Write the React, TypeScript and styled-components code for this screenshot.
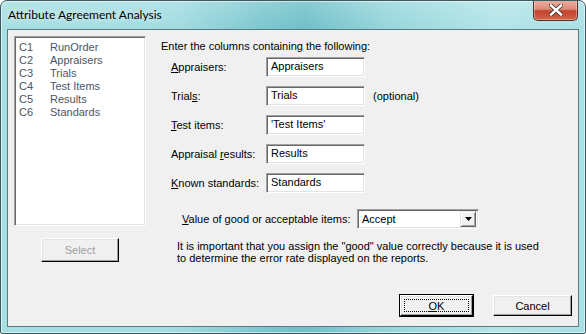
import React from 'react';
import styled, { createGlobalStyle } from 'styled-components';

const GlobalStyle = createGlobalStyle`
  html, body {
    margin: 0;
    padding: 0;
    background: #ffffff;
  }
  * {
    box-sizing: border-box;
  }
`;

const Window = styled.div`
  width: 586px;
  height: 334px;
  border: 1px solid #3b5a60;
  border-radius: 7px 7px 2px 2px;
  display: flex;
  flex-direction: column;
  background:
    linear-gradient(180deg, rgba(255, 255, 255, 0.18) 0px, rgba(255, 255, 255, 0) 28px),
    linear-gradient(90deg, #a7dfe3 0%, #a2dce1 30%, #7cc7ce 45%, #70c0c8 52%, #96d6db 66%, #b3e5e8 85%, #a9e0e4 100%);
  box-shadow: inset 0 0 0 1px rgba(255, 255, 255, 0.55);
  overflow: hidden;
`;

const TitleBar = styled.div`
  height: 28px;
  display: flex;
  align-items: flex-start;
  padding-left: 7px;
  padding-right: 7px;
`;

const Title = styled.div`
  font-family: Lato, 'Open Sans', sans-serif;
  font-size: 12px;
  color: #000;
  line-height: 16px;
  margin-top: 6px;
  text-shadow: 0 0 6px rgba(255, 255, 255, 0.9);
`;

const CloseButton = styled.div`
  margin-left: auto;
  margin-top: -1px;
  width: 45px;
  height: 21px;
  border: 1px solid #5b2c24;
  border-top: none;
  border-radius: 0 0 5px 5px;
  background: linear-gradient(180deg, #eab0a2 0%, #dd8d78 45%, #c4412a 55%, #d0654a 100%);
  box-shadow: inset 0 0 0 1px rgba(255, 255, 255, 0.35);
  display: flex;
  align-items: center;
  justify-content: center;
`;

const Client = styled.div`
  flex: 1;
  margin: 0 6px 6px;
  border: 1px solid #5d7a80;
  background: #f0f0f0;
  display: flex;
  flex-direction: column;
  font-family: 'Liberation Sans', Arial, sans-serif;
  font-size: 11px;
  color: #000;
`;

const Main = styled.div`
  display: flex;
  gap: 15px;
`;

const LeftColumn = styled.div`
  padding: 6px 0 0 6px;
  display: flex;
  flex-direction: column;
`;

const sunken = `
  border-top: 1px solid #a0a0a0;
  border-left: 1px solid #a0a0a0;
  border-bottom: 1px solid #ffffff;
  border-right: 1px solid #ffffff;
  box-shadow: inset 1px 1px 0 #696969, inset -1px -1px 0 #e3e3e3;
  background: #ffffff;
`;

const ListBox = styled.div`
  ${sunken}
  width: 132px;
  height: 190px;
  padding: 4px 0 0 4px;
`;

const ListRow = styled.div`
  display: flex;
  height: 13px;
  line-height: 13px;
  color: #4a5668;
`;

const ListCol = styled.span`
  width: 31px;
`;

const Button = styled.div<{ $width: number; $disabled?: boolean; $default?: boolean }>`
  width: ${(p) => p.$width}px;
  height: 21px;
  background: #f0f0f0;
  border-top: 1px solid #ffffff;
  border-left: 1px solid #ffffff;
  border-bottom: 1px solid #000000;
  border-right: 1px solid #000000;
  box-shadow: inset -1px -1px 0 #a0a0a0, inset 1px 1px 0 #e3e3e3;
  outline: ${(p) => (p.$default ? '1px solid #000' : 'none')};
  display: flex;
  align-items: center;
  justify-content: center;
  color: ${(p) => (p.$disabled ? '#a0a0a0' : '#000')};
  position: relative;
`;

const SelectButton = styled(Button)`
  height: 24px;
  margin: 12px 0 0 27px;
`;

const FocusRing = styled.div`
  position: absolute;
  inset: 3px;
  border: 1px dotted #000;
`;

const RightColumn = styled.div`
  padding-top: 10px;
  display: flex;
  flex-direction: column;
`;

const Heading = styled.div`
  line-height: 13px;
  margin-bottom: 4px;
`;

const Fields = styled.div`
  display: flex;
  flex-direction: column;
  gap: 9px;
  padding-left: 10px;
`;

const FieldRow = styled.div`
  display: flex;
  align-items: center;
  height: 20px;
`;

const Label = styled.span`
  width: 95px;
`;

const TextBox = styled.div`
  ${sunken}
  width: 99px;
  height: 20px;
  padding: 0 4px;
  line-height: 17px;
`;

const Note = styled.span`
  margin-left: 8px;
`;

const ValueRow = styled.div`
  display: flex;
  align-items: center;
  margin: 16px 0 0 21px;
  height: 20px;
`;

const ValueLabel = styled.span`
  width: 175px;
`;

const Combo = styled.div`
  ${sunken}
  width: 122px;
  height: 20px;
  display: flex;
  align-items: center;
  padding: 2px 2px 2px 4px;
`;

const ComboText = styled.span`
  flex: 1;
`;

const ComboArrow = styled.div`
  width: 16px;
  height: 16px;
  background: #f0f0f0;
  border-top: 1px solid #e3e3e3;
  border-left: 1px solid #e3e3e3;
  border-bottom: 1px solid #696969;
  border-right: 1px solid #696969;
  box-shadow: inset 1px 1px 0 #ffffff, inset -1px -1px 0 #a0a0a0;
  display: flex;
  align-items: center;
  justify-content: center;
`;

const Info = styled.div`
  margin: 11px 0 0 16px;
  line-height: 12px;
`;

const Footer = styled.div`
  margin-top: auto;
  display: flex;
  justify-content: flex-end;
  gap: 20px;
  padding: 0 6px 10px 0;
`;

const U = styled.span`
  text-decoration: underline;
`;

const columns = [
  ['C1', 'RunOrder'],
  ['C2', 'Appraisers'],
  ['C3', 'Trials'],
  ['C4', 'Test Items'],
  ['C5', 'Results'],
  ['C6', 'Standards'],
];

export default function App() {
  return (
    <>
      <GlobalStyle />
      <Window>
        <TitleBar>
          <Title>Attribute Agreement Analysis</Title>
          <CloseButton>
            <svg width="14" height="12" viewBox="0 0 14 12">
              <path d="M2 1.5 L12 10.5 M12 1.5 L2 10.5" stroke="#4a3a3a" strokeWidth="4.2" strokeLinecap="square" />
              <path d="M2 1.5 L12 10.5 M12 1.5 L2 10.5" stroke="#ffffff" strokeWidth="2.4" strokeLinecap="square" />
            </svg>
          </CloseButton>
        </TitleBar>
        <Client>
          <Main>
            <LeftColumn>
              <ListBox>
                {columns.map(([c, name]) => (
                  <ListRow key={c}>
                    <ListCol>{c}</ListCol>
                    <span>{name}</span>
                  </ListRow>
                ))}
              </ListBox>
              <SelectButton $width={78} $disabled>
                Select
              </SelectButton>
            </LeftColumn>
            <RightColumn>
              <Heading>Enter the columns containing the following:</Heading>
              <Fields>
                <FieldRow>
                  <Label>
                    <U>A</U>ppraisers:
                  </Label>
                  <TextBox>Appraisers</TextBox>
                </FieldRow>
                <FieldRow>
                  <Label>
                    Trial<U>s</U>:
                  </Label>
                  <TextBox>Trials</TextBox>
                  <Note>(optional)</Note>
                </FieldRow>
                <FieldRow>
                  <Label>
                    <U>T</U>est items:
                  </Label>
                  <TextBox>'Test Items'</TextBox>
                </FieldRow>
                <FieldRow>
                  <Label>
                    Appraisal <U>r</U>esults:
                  </Label>
                  <TextBox>Results</TextBox>
                </FieldRow>
                <FieldRow>
                  <Label>
                    <U>K</U>nown standards:
                  </Label>
                  <TextBox>Standards</TextBox>
                </FieldRow>
              </Fields>
              <ValueRow>
                <ValueLabel>
                  <U>V</U>alue of good or acceptable items:
                </ValueLabel>
                <Combo>
                  <ComboText>Accept</ComboText>
                  <ComboArrow>
                    <svg width="7" height="4" viewBox="0 0 7 4">
                      <path d="M0 0 H7 L3.5 4 Z" fill="#000" />
                    </svg>
                  </ComboArrow>
                </Combo>
              </ValueRow>
              <Info>
                It is important that you assign the "good" value correctly because it is used
                <br />
                to determine the error rate displayed on the reports.
              </Info>
            </RightColumn>
          </Main>
          <Footer>
            <Button $width={73} $default>
              <FocusRing />
              <span>
                <U>O</U>K
              </span>
            </Button>
            <Button $width={79}>Cancel</Button>
          </Footer>
        </Client>
      </Window>
    </>
  );
}
